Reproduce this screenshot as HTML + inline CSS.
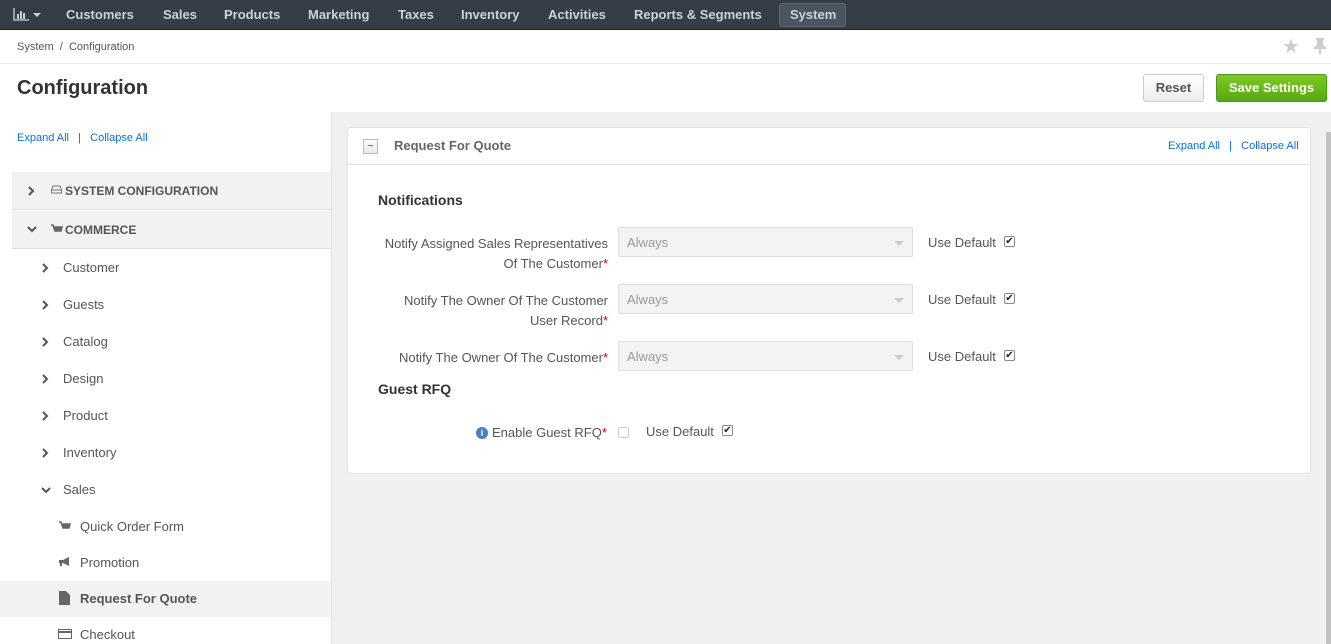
<!DOCTYPE html>
<html><head><meta charset="utf-8"><style>
*{box-sizing:border-box;margin:0;padding:0}
body{width:1331px;height:644px;overflow:hidden;font-family:"Liberation Sans",Arial,sans-serif;background:#fff;position:relative;color:#555}
.a{position:absolute;white-space:nowrap}
#nav{left:0;top:0;width:1331px;height:30px;background:#353e47;border-bottom:1px solid #222}
.ni{top:7px;font-size:13px;font-weight:bold;color:#c9d3dc}
#sys{left:779px;top:3px;width:67px;height:24px;background:#4b5560;border:1px solid #5e6873;border-radius:3px}
.lnk{color:#0f6fc6;font-size:11px}
.side{left:0;top:112px;width:332px;height:532px;background:#fff;border-right:1px solid #e2e2e2}
.grp{left:12px;width:319px;height:38px;background:#f2f2f2;border-bottom:1px solid #e0e0e0}
.gt{font-size:12px;font-weight:bold;color:#555}
.it{font-size:13px;color:#555}
.lab{font-size:13px;color:#555;text-align:right}
.sel{width:295px;height:30px;background:#f3f3f3;border:1px solid #ddd;border-radius:2px;font-size:13px;color:#999;padding:7px 8px}
.sel:after{content:"";position:absolute;right:8px;top:13px;border-left:5px solid transparent;border-right:5px solid transparent;border-top:5px solid #ccc}
.ud{font-size:13px;color:#555}
.cb{width:11px;height:11px;border:1px solid #888;background:#fff;border-radius:2px;font-size:10px;line-height:9px;text-align:center;color:#222}
.req{color:#c00}
</style></head><body>
<div id="nav" class="a"></div>
<svg class="a" style="left:13px;top:8px" width="16" height="13"><path d="M1 0v12h15" stroke="#c9d3dc" fill="none" stroke-width="1.3"/><rect x="4" y="6" width="2" height="5" fill="#c9d3dc"/><rect x="7" y="3" width="2" height="8" fill="#c9d3dc"/><rect x="10" y="5" width="2" height="6" fill="#c9d3dc"/></svg>
<div class="a" style="left:33px;top:13px;border-left:4px solid transparent;border-right:4px solid transparent;border-top:4px solid #c9d3dc"></div>
<div class="a ni" style="left:66px">Customers</div>
<div class="a ni" style="left:163px">Sales</div>
<div class="a ni" style="left:224px">Products</div>
<div class="a ni" style="left:308px">Marketing</div>
<div class="a ni" style="left:398px">Taxes</div>
<div class="a ni" style="left:461px">Inventory</div>
<div class="a ni" style="left:548px">Activities</div>
<div class="a ni" style="left:634px">Reports &amp; Segments</div>
<div id="sys" class="a"></div>
<div class="a ni" style="left:790px">System</div>

<div class="a" style="left:17px;top:41px;font-size:11px;color:#555">System &nbsp;/&nbsp; Configuration</div>
<div class="a" style="left:1282px;top:34px;font-size:20px;color:#ccc">★</div>
<svg class="a" style="left:1313px;top:38px" width="14" height="16"><path d="M3 1h8M5 1v6L2 10h10L9 7V1M7 10v6" stroke="#ccc" stroke-width="2" fill="#ccc"/></svg>
<div class="a" style="left:0;top:63px;width:1331px;height:1px;background:#ececec"></div>
<div class="a" style="left:17px;top:77px;font-size:20px;font-weight:bold;color:#333">Configuration</div>
<div class="a" style="left:1143px;top:74px;width:61px;height:28px;border:1px solid #ccc;border-radius:3px;background:linear-gradient(#fff,#ececec);font-size:13px;font-weight:bold;color:#555;text-align:center;line-height:26px">Reset</div>
<div class="a" style="left:1216px;top:74px;width:111px;height:28px;border:1px solid #4a9a12;border-radius:3px;background:linear-gradient(#7ccb23,#55a811);font-size:13px;font-weight:bold;color:#fff;text-align:center;line-height:26px">Save Settings</div>

<div class="a" style="left:0;top:112px;width:1331px;height:532px;background:#f0f0f0"></div>
<div class="a side"></div>
<div class="a lnk" style="left:17px;top:132px">Expand All &nbsp;&nbsp;|&nbsp;&nbsp; Collapse All</div>
<div class="a grp" style="top:172px"></div>
<svg class="a" style="left:28px;top:186px" width="7" height="10"><path d="M1 1l4 4-4 4" stroke="#555" stroke-width="2" fill="none"/></svg>
<svg class="a" style="left:51px;top:185px" width="11" height="9"><path d="M2 1h7l1.5 4v3h-10V5z M.5 5h10" stroke="#777" fill="none"/></svg>
<div class="a gt" style="left:65px;top:184px">SYSTEM CONFIGURATION</div>
<div class="a grp" style="top:211px"></div>
<svg class="a" style="left:27px;top:226px" width="10" height="7"><path d="M1 1l4 4 4-4" stroke="#555" stroke-width="2" fill="none"/></svg>
<svg class="a" style="left:51px;top:224px" width="12" height="10"><path d="M0 1h2l2 6h6l1-4H3" stroke="#666" stroke-width="1.5" fill="#666"/></svg>
<div class="a gt" style="left:65px;top:223px">COMMERCE</div>
<svg class="a" style="left:42px;top:263px" width="7" height="10"><path d="M1 1l4 4-4 4" stroke="#555" stroke-width="2" fill="none"/></svg><div class="a it" style="left:63px;top:260px">Customer</div>
<svg class="a" style="left:42px;top:300px" width="7" height="10"><path d="M1 1l4 4-4 4" stroke="#555" stroke-width="2" fill="none"/></svg><div class="a it" style="left:63px;top:297px">Guests</div>
<svg class="a" style="left:42px;top:337px" width="7" height="10"><path d="M1 1l4 4-4 4" stroke="#555" stroke-width="2" fill="none"/></svg><div class="a it" style="left:63px;top:334px">Catalog</div>
<svg class="a" style="left:42px;top:374px" width="7" height="10"><path d="M1 1l4 4-4 4" stroke="#555" stroke-width="2" fill="none"/></svg><div class="a it" style="left:63px;top:371px">Design</div>
<svg class="a" style="left:42px;top:411px" width="7" height="10"><path d="M1 1l4 4-4 4" stroke="#555" stroke-width="2" fill="none"/></svg><div class="a it" style="left:63px;top:408px">Product</div>
<svg class="a" style="left:42px;top:448px" width="7" height="10"><path d="M1 1l4 4-4 4" stroke="#555" stroke-width="2" fill="none"/></svg><div class="a it" style="left:63px;top:445px">Inventory</div>
<svg class="a" style="left:41px;top:487px" width="10" height="7"><path d="M1 1l4 4 4-4" stroke="#555" stroke-width="2" fill="none"/></svg><div class="a it" style="left:63px;top:482px">Sales</div>
<svg class="a" style="left:59px;top:521px" width="12" height="10"><path d="M0 1h2l2 6h6l1-4H3" stroke="#666" stroke-width="1.5" fill="#666"/></svg>
<div class="a it" style="left:80px;top:519px">Quick Order Form</div>
<svg class="a" style="left:58px;top:556px" width="14" height="11"><path d="M1 4h4l6-3v9L5 7H1z" fill="#666"/><path d="M3 7v3" stroke="#666" stroke-width="2"/></svg>
<div class="a it" style="left:80px;top:555px">Promotion</div>
<div class="a" style="left:0;top:581px;width:331px;height:36px;background:#f2f2f2"></div>
<svg class="a" style="left:59px;top:591px" width="11" height="14"><path d="M0 0h7l4 4v10H0z" fill="#666"/></svg>
<div class="a it" style="left:80px;top:591px;font-weight:bold">Request For Quote</div>
<svg class="a" style="left:58px;top:629px" width="14" height="10"><rect x=".5" y=".5" width="13" height="9" fill="none" stroke="#666"/><rect x="0" y="2" width="14" height="2" fill="#666"/></svg>
<div class="a it" style="left:80px;top:627px">Checkout</div>

<div class="a" style="left:347px;top:127px;width:964px;height:347px;background:#fff;border:1px solid #e3e3e3;border-radius:4px"></div>
<div class="a" style="left:348px;top:164px;width:962px;height:1px;background:#e3e3e3"></div>
<div class="a" style="left:363px;top:139px;width:15px;height:15px;border:1px solid #bbb;background:linear-gradient(#fff,#e8e8e8);font-size:11px;line-height:12px;text-align:center;color:#555">−</div>
<div class="a" style="left:394px;top:138px;font-size:13px;font-weight:bold;color:#666">Request For Quote</div>
<div class="a lnk" style="left:1168px;top:140px">Expand All &nbsp;&nbsp;|&nbsp;&nbsp; Collapse All</div>
<div class="a" style="left:378px;top:192px;font-size:14px;font-weight:bold;color:#333">Notifications</div>

<div class="a lab" style="right:723px;top:234px;line-height:20px">Notify Assigned Sales Representatives<br>Of The Customer<span class="req">*</span></div>
<div class="a sel" style="left:618px;top:227px">Always</div>
<div class="a ud" style="left:928px;top:235px">Use Default</div><div class="a cb" style="left:1004px;top:236px">✔</div>

<div class="a lab" style="right:723px;top:291px;line-height:20px">Notify The Owner Of The Customer<br>User Record<span class="req">*</span></div>
<div class="a sel" style="left:618px;top:284px">Always</div>
<div class="a ud" style="left:928px;top:292px">Use Default</div><div class="a cb" style="left:1004px;top:293px">✔</div>

<div class="a lab" style="right:723px;top:350px">Notify The Owner Of The Customer<span class="req">*</span></div>
<div class="a sel" style="left:618px;top:341px">Always</div>
<div class="a ud" style="left:928px;top:349px">Use Default</div><div class="a cb" style="left:1004px;top:350px">✔</div>

<div class="a" style="left:378px;top:381px;font-size:14px;font-weight:bold;color:#333">Guest RFQ</div>
<div class="a" style="left:476px;top:427px;width:12px;height:12px;border-radius:50%;background:#4a7fbd;color:#fff;font-size:9px;font-weight:bold;text-align:center;line-height:12px">i</div>
<div class="a lab" style="left:492px;top:425px">Enable Guest RFQ<span class="req">*</span></div>
<div class="a cb" style="left:618px;top:427px;border-color:#ccc"></div>
<div class="a ud" style="left:646px;top:424px">Use Default</div><div class="a cb" style="left:722px;top:425px">✔</div>

<div class="a" style="left:1326px;top:132px;width:5px;height:512px;background:#c1c1c1"></div>
</body></html>
